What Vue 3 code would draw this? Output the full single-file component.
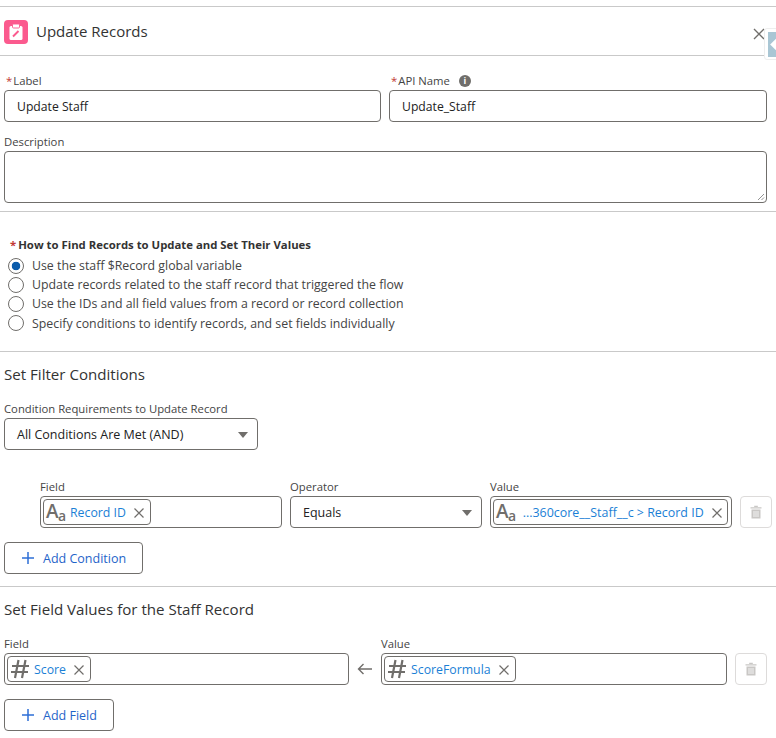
<script setup>
const radios = [
  { text: 'Use the staff $Record global variable', checked: true },
  { text: 'Update records related to the staff record that triggered the flow', checked: false },
  { text: 'Use the IDs and all field values from a record or record collection', checked: false },
  { text: 'Specify conditions to identify records, and set fields individually', checked: false },
]
</script>

<template>
  <div class="page">
    <header class="head">
      <span class="head_icon">
        <svg width="16" height="16" viewBox="0 0 16 16">
          <rect x="1.5" y="2" width="13" height="14" rx="1.5" fill="#fff" />
          <rect x="4.5" y="0" width="7" height="4" rx="1" fill="#fff" stroke="#fb5a8e" stroke-width="0.9" />
          <path d="M5 12.5 L10.5 7" stroke="#fb5a8e" stroke-width="1.9" fill="none" />
        </svg>
      </span>
      <h1 class="head_title">Update Records</h1>
      <svg class="close" width="12" height="12" viewBox="0 0 12 12">
        <path d="M1 1 L11 11 M11 1 L1 11" stroke="#706e6b" stroke-width="1.4" fill="none" />
      </svg>
      <div class="tab"><span class="tab_inner"><span class="tab_arrow"></span></span></div>
    </header>

    <section class="basics">
      <div class="two_col">
        <div class="field">
          <label class="lbl"><span class="req">*</span>Label</label>
          <div class="box">Update Staff</div>
        </div>
        <div class="field">
          <label class="lbl">
            <span class="req">*</span>API Name
            <span class="info">i</span>
          </label>
          <div class="box">Update_Staff</div>
        </div>
      </div>
      <div class="field desc">
        <label class="lbl">Description</label>
        <div class="box area">
          <svg class="grip" width="8" height="8" viewBox="0 0 8 8">
            <path d="M1 7 L7 1 M4.5 7 L7 4.5" stroke="#777" stroke-width="0.8" fill="none" />
          </svg>
        </div>
      </div>
    </section>

    <section class="how">
      <div class="how_title"><span class="req">*</span>How to Find Records to Update and Set Their Values</div>
      <div class="radio_list">
        <div v-for="r in radios" :key="r.text" class="radio_row">
          <span class="radio" :class="{ on: r.checked }"></span>
          <span>{{ r.text }}</span>
        </div>
      </div>
    </section>

    <section class="filter">
      <h2 class="sec_title">Set Filter Conditions</h2>
      <label class="lbl req_lbl">Condition Requirements to Update Record</label>
      <div class="box select req_select">
        All Conditions Are Met (AND)
        <span class="caret"></span>
      </div>

      <div class="cond_row">
        <div class="field">
          <label class="lbl">Field</label>
          <div class="box pill_box">
            <span class="pill">
              <span class="aa">A<small>a</small></span>
              <span class="pill_text">Record ID</span>
              <svg class="pill_x" width="10" height="10" viewBox="0 0 10 10"><path d="M0.5 0.5 L9.5 9.5 M9.5 0.5 L0.5 9.5" stroke="#706e6b" stroke-width="1.2" /></svg>
            </span>
          </div>
        </div>
        <div class="field">
          <label class="lbl">Operator</label>
          <div class="box select">
            Equals
            <span class="caret"></span>
          </div>
        </div>
        <div class="field">
          <label class="lbl">Value</label>
          <div class="box pill_box">
            <span class="pill wide">
              <span class="aa">A<small>a</small></span>
              <span class="pill_text">...360core__Staff__c &gt; Record ID</span>
              <svg class="pill_x" width="10" height="10" viewBox="0 0 10 10"><path d="M0.5 0.5 L9.5 9.5 M9.5 0.5 L0.5 9.5" stroke="#706e6b" stroke-width="1.2" /></svg>
            </span>
          </div>
        </div>
        <button class="trash">
          <svg width="12" height="14" viewBox="0 0 12 14">
            <path d="M4.2 2 V0.8 H7.8 V2 M0.5 2.2 H11.5 V3.6 H0.5 Z M1.5 4.6 H10.5 V13.5 H1.5 Z" fill="#c9c7c5" />
            <path d="M4 6 V12 M6 6 V12 M8 6 V12" stroke="#fff" stroke-width="0.8" />
          </svg>
        </button>
      </div>

      <button class="add_btn">
        <svg width="14" height="14" viewBox="0 0 14 14"><path d="M7 1 V13 M1 7 H13" stroke="#2e6fd6" stroke-width="1.5" /></svg>
        Add Condition
      </button>
    </section>

    <section class="values">
      <h2 class="sec_title">Set Field Values for the Staff Record</h2>
      <div class="value_row">
        <div class="field">
          <label class="lbl">Field</label>
          <div class="box pill_box">
            <span class="pill">
              <svg class="hash" width="20" height="20" viewBox="0 0 20 20"><path d="M8.5 1 L5 19 M15.5 1 L12 19 M2 7 H19 M1 13 H18" stroke="#706e6b" stroke-width="2.2" fill="none" /></svg>
              <span class="pill_text">Score</span>
              <svg class="pill_x" width="10" height="10" viewBox="0 0 10 10"><path d="M0.5 0.5 L9.5 9.5 M9.5 0.5 L0.5 9.5" stroke="#706e6b" stroke-width="1.2" /></svg>
            </span>
          </div>
        </div>
        <svg class="arrow" width="16" height="12" viewBox="0 0 16 12">
          <path d="M15 6 H1.5 M6.5 1 L1.5 6 L6.5 11" stroke="#706e6b" stroke-width="1.4" fill="none" />
        </svg>
        <div class="field">
          <label class="lbl">Value</label>
          <div class="box pill_box">
            <span class="pill">
              <svg class="hash" width="20" height="20" viewBox="0 0 20 20"><path d="M8.5 1 L5 19 M15.5 1 L12 19 M2 7 H19 M1 13 H18" stroke="#706e6b" stroke-width="2.2" fill="none" /></svg>
              <span class="pill_text">ScoreFormula</span>
              <svg class="pill_x" width="10" height="10" viewBox="0 0 10 10"><path d="M0.5 0.5 L9.5 9.5 M9.5 0.5 L0.5 9.5" stroke="#706e6b" stroke-width="1.2" /></svg>
            </span>
          </div>
        </div>
        <button class="trash">
          <svg width="12" height="14" viewBox="0 0 12 14">
            <path d="M4.2 2 V0.8 H7.8 V2 M0.5 2.2 H11.5 V3.6 H0.5 Z M1.5 4.6 H10.5 V13.5 H1.5 Z" fill="#c9c7c5" />
            <path d="M4 6 V12 M6 6 V12 M8 6 V12" stroke="#fff" stroke-width="0.8" />
          </svg>
        </button>
      </div>
      <button class="add_btn">
        <svg width="14" height="14" viewBox="0 0 14 14"><path d="M7 1 V13 M1 7 H13" stroke="#2e6fd6" stroke-width="1.5" /></svg>
        Add Field
      </button>
    </section>
  </div>
</template>

<style scoped>
.page {
  width: 776px;
  height: 738px;
  overflow: hidden;
  padding-top: 6px;
  box-sizing: border-box;
  background: #fff;
  font-family: "Open Sans", "Noto Sans", sans-serif;
  font-size: 12px;
  color: #444;
}

.head {
  position: relative;
  display: flex;
  align-items: center;
  height: 48px;
  padding: 0 4px;
  gap: 8px;
  border-top: 1px solid #c9c9c9;
  border-bottom: 1px solid #c9c9c9;
}
.head_icon {
  display: flex;
  align-items: center;
  justify-content: center;
  width: 24px;
  height: 24px;
  margin-top: 1px;
  border-radius: 4px;
  background: #fb5a8e;
}
.head_title {
  margin: 0;
  font-size: 15px;
  font-weight: 400;
  color: #333;
}
.close {
  position: absolute;
  left: 753px;
  top: 21px;
}
.tab {
  position: absolute;
  left: 764px;
  top: 21px;
  width: 14px;
  height: 32px;
  border: 1px solid #eee;
  border-radius: 3px 0 0 3px;
  background: #fff;
  padding: 3px 0 2px 3px;
  box-sizing: border-box;
}
.tab_inner {
  display: block;
  position: relative;
  height: 100%;
  background: #a9c6d4;
  overflow: hidden;
}
.tab_arrow {
  position: absolute;
  left: 4px;
  top: 8px;
  width: 9px;
  height: 9px;
  background: #fff;
  transform: rotate(45deg);
}

.basics {
  padding: 14px 9px 8px 4px;
  border-bottom: 1px solid #c9c9c9;
}
.two_col {
  display: grid;
  grid-template-columns: 377px 378px;
  gap: 8px;
}
.field {
  display: flex;
  flex-direction: column;
  min-width: 0;
}
.lbl {
  display: block;
  height: 20px;
  line-height: 22px;
  font-size: 11.3px;
  color: #444;
  white-space: nowrap;
}
.req {
  color: #c23934;
  margin: 0 1px 0 2px;
}
.info {
  display: inline-block;
  width: 12px;
  height: 12px;
  margin-left: 6px;
  border-radius: 50%;
  background: #706e6b;
  color: #fff;
  font-size: 9px;
  font-weight: 700;
  line-height: 12px;
  text-align: center;
  vertical-align: 1px;
}
.box {
  position: relative;
  box-sizing: border-box;
  height: 32px;
  border: 1px solid #706e6b;
  border-radius: 4px;
  padding: 0 12px;
  line-height: 32px;
  font-size: 12.2px;
  color: #222;
  background: #fff;
}
.desc {
  margin-top: 9px;
}
.area {
  height: 52px;
}
.grip {
  position: absolute;
  right: 1px;
  bottom: 1px;
}

.how {
  height: 140px;
  box-sizing: border-box;
  padding: 23px 0 0 8px;
  border-bottom: 1px solid #c9c9c9;
}
.how_title {
  height: 21px;
  line-height: 20px;
  font-size: 11.35px;
  font-weight: 700;
  color: #333;
}
.how_title .req {
  margin: 0 2px 0 2px;
}
.radio_list {
  display: flex;
  flex-direction: column;
}
.radio_row {
  display: flex;
  align-items: center;
  gap: 8px;
  height: 19.2px;
  font-size: 12.33px;
  color: #444;
  white-space: nowrap;
}
.radio {
  box-sizing: border-box;
  width: 16px;
  height: 16px;
  border: 1px solid #706e6b;
  border-radius: 50%;
  background: #fff;
}
.radio.on {
  background: radial-gradient(circle, #0b5cab 0 4px, #fff 4.6px);
}

.filter {
  height: 235px;
  box-sizing: border-box;
  padding: 12px 0 0 4px;
  border-bottom: 1px solid #c9c9c9;
}
.sec_title {
  margin: 0;
  height: 22px;
  line-height: 20px;
  font-size: 15.1px;
  font-weight: 400;
  color: #333;
}
.req_lbl {
  margin-top: 12px;
}
.select {
  padding-right: 30px;
  font-size: 12.5px;
}
.req_select {
  width: 254px;
}
.caret {
  position: absolute;
  right: 9px;
  top: 13px;
  width: 0;
  height: 0;
  border-left: 5.5px solid transparent;
  border-right: 5.5px solid transparent;
  border-top: 6px solid #706e6b;
}
.cond_row {
  display: grid;
  grid-template-columns: 242px 192px 242px 32px;
  gap: 8px;
  margin: 26px 0 14px 36px;
  align-items: end;
}
.pill_box {
  padding: 2px 3px 2px 2px;
  line-height: 26px;
}
.pill {
  display: inline-flex;
  align-items: center;
  box-sizing: border-box;
  height: 26px;
  padding: 0 6px 0 2px;
  border: 1px solid #706e6b;
  border-radius: 4px;
  background: #fff;
  vertical-align: top;
}
.pill.wide {
  width: 100%;
}
.wide .pill_text {
  margin-left: 7px;
  font-size: 12.45px;
}
.aa {
  display: inline-block;
  width: 20px;
  font-size: 19px;
  font-weight: 600;
  line-height: 24px;
  color: #706e6b;
  letter-spacing: -0.5px;
}
.aa small {
  font-size: 14px;
  position: relative;
  top: 3px;
}
.hash {
  flex: none;
}
.pill_text {
  margin-left: 4px;
  padding-top: 1px;
  font-size: 12.3px;
  color: #1b7fd6;
  white-space: nowrap;
}
.pill_x {
  margin-left: 8px;
  margin-top: 1px;
  flex: none;
}
.trash {
  display: flex;
  align-items: center;
  justify-content: center;
  box-sizing: border-box;
  width: 32px;
  height: 32px;
  padding: 0;
  border: 1px solid #dddbda;
  border-radius: 4px;
  background: #fff;
}
.add_btn {
  display: inline-flex;
  align-items: center;
  gap: 8px;
  box-sizing: border-box;
  height: 32px;
  padding: 0 16px;
  border: 1px solid #706e6b;
  border-radius: 4px;
  background: #fff;
  color: #1f64c9;
  font-family: inherit;
  font-size: 12.5px;
}

.values {
  padding: 12px 0 0 4px;
}
.value_row {
  display: grid;
  grid-template-columns: 345px 16px 346px 32px;
  column-gap: 8px;
  margin: 12px 0 14px 0;
  align-items: end;
}
.arrow {
  margin-bottom: 10px;
}
</style>
